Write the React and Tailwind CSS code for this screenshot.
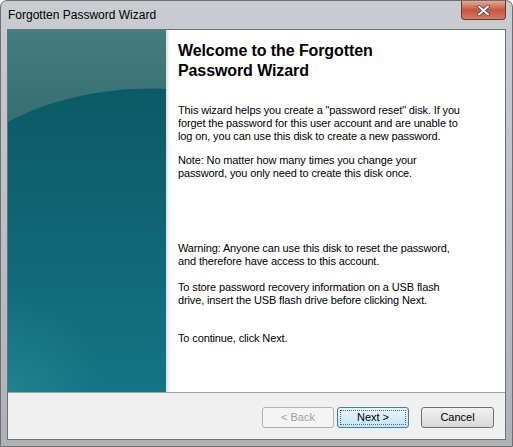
function WizardArt() {
  return (
    <svg className="absolute inset-0 h-full w-full" viewBox="0 0 158 362" preserveAspectRatio="none">
      <defs>
        <linearGradient id="lowTeal" x1="0" y1="0" x2="0" y2="1">
          <stop offset="0" stopColor="#0a5660" />
          <stop offset="0.5" stopColor="#0f6472" />
          <stop offset="1" stopColor="#157484" />
        </linearGradient>
        <linearGradient id="topTeal" x1="0" y1="0" x2="0" y2="1">
          <stop offset="0" stopColor="#437d7f" />
          <stop offset="1" stopColor="#356f73" />
        </linearGradient>
        <radialGradient id="glow" cx="0" cy="1" r="0.6">
          <stop offset="0" stopColor="#2a8a96" stopOpacity="0.6" />
          <stop offset="1" stopColor="#2a8a96" stopOpacity="0" />
        </radialGradient>
      </defs>
      <rect x="0" y="0" width="158" height="362" fill="url(#lowTeal)" />
      <path d="M0 0 H158 V59 C100 56 40 70 0 92 Z" fill="url(#topTeal)" />
      <rect x="0" y="200" width="158" height="162" fill="url(#glow)" />
    </svg>
  );
}

export default function App() {
  const body = "text-[11px] leading-[13px] tracking-[-0.13px] text-black";
  return (
    <div
      className="relative h-[447px] w-[513px] overflow-hidden rounded-t-[7px] border border-[#6f6f6f] bg-gradient-to-b from-[#c9cdd2] via-[#bcc0c4] to-[#aeb2b6]"
      style={{ fontFamily: '"Liberation Sans", Arial, sans-serif' }}
    >
      <div className="flex h-[28px] items-start justify-between">
        <div className="pl-[7px] pt-[7px] text-[12px] leading-[14px] text-black">Forgotten Password Wizard</div>
        <div className="mr-[6px] flex h-[19px] w-[45px] items-center justify-center rounded-b-[4px] border border-t-0 border-[#6a3a33] bg-gradient-to-b from-[#e8a898] via-[#c5573c] to-[#d77a62]">
          <svg width="13" height="11" viewBox="0 0 13 11">
            <path d="M2 1.5 L11 9.5 M11 1.5 L2 9.5" stroke="#3a3a4a" strokeWidth="3.4" strokeLinecap="round" />
            <path d="M2 1.5 L11 9.5 M11 1.5 L2 9.5" stroke="#ffffff" strokeWidth="2" strokeLinecap="round" />
          </svg>
        </div>
      </div>
      <div className="mx-[6px] flex h-[411px] flex-col border border-[#6d7278] bg-[#f0f0f0]">
        <div className="flex h-[362px] bg-white">
          <div className="relative w-[158px] shrink-0">
            <WizardArt />
          </div>
          <div className="w-[4px] shrink-0 bg-gradient-to-r from-[#dcdcdc] to-white" />
          <div className="flex flex-col pl-[8px] pt-[11px]">
            <div className="text-[16px] font-bold leading-[20px] tracking-[-0.1px] text-black">
              Welcome to the Forgotten
              <br />
              Password Wizard
            </div>
            <div className={`${body} mt-[23px]`}>
              This wizard helps you create a "password reset" disk. If you
              <br />
              forget the password for this user account and are unable to
              <br />
              log on, you can use this disk to create a new password.
            </div>
            <div className={`${body} mt-[11px]`}>
              Note: No matter how many times you change your
              <br />
              password, you only need to create this disk once.
            </div>
            <div className={`${body} mt-[62px]`}>
              Warning: Anyone can use this disk to reset the password,
              <br />
              and therefore have access to this account.
            </div>
            <div className={`${body} mt-[13px]`}>
              To store password recovery information on a USB flash
              <br />
              drive, insert the USB flash drive before clicking Next.
            </div>
            <div className={`${body} mt-[25px]`}>To continue, click Next.</div>
          </div>
        </div>
        <div className="h-px bg-[#a0a0a0]" />
        <div className="flex items-start justify-end pr-[11px] pt-[14px]">
          <button
            type="button"
            disabled
            className="h-[21px] w-[72px] rounded-[3px] border border-[#adb2b5] bg-[#f4f4f4] text-[11px] text-[#a0a0a0]"
          >
            &lt; Back
          </button>
          <button
            type="button"
            className="ml-[3px] flex h-[21px] w-[72px] items-center justify-center rounded-[3px] border border-[#3c7fb1] bg-gradient-to-b from-[#eaf6fd] to-[#c4e4f5] p-[2px] text-[11px] text-black"
          >
            <span className="flex h-full w-full items-center justify-center border border-dotted border-[#5a6a78]">
              Next &gt;
            </span>
          </button>
          <button
            type="button"
            className="ml-[12px] h-[21px] w-[73px] rounded-[3px] border border-[#707070] bg-gradient-to-b from-[#f2f2f2] to-[#d8d8d8] text-[11px] text-black"
          >
            Cancel
          </button>
        </div>
      </div>
    </div>
  );
}
